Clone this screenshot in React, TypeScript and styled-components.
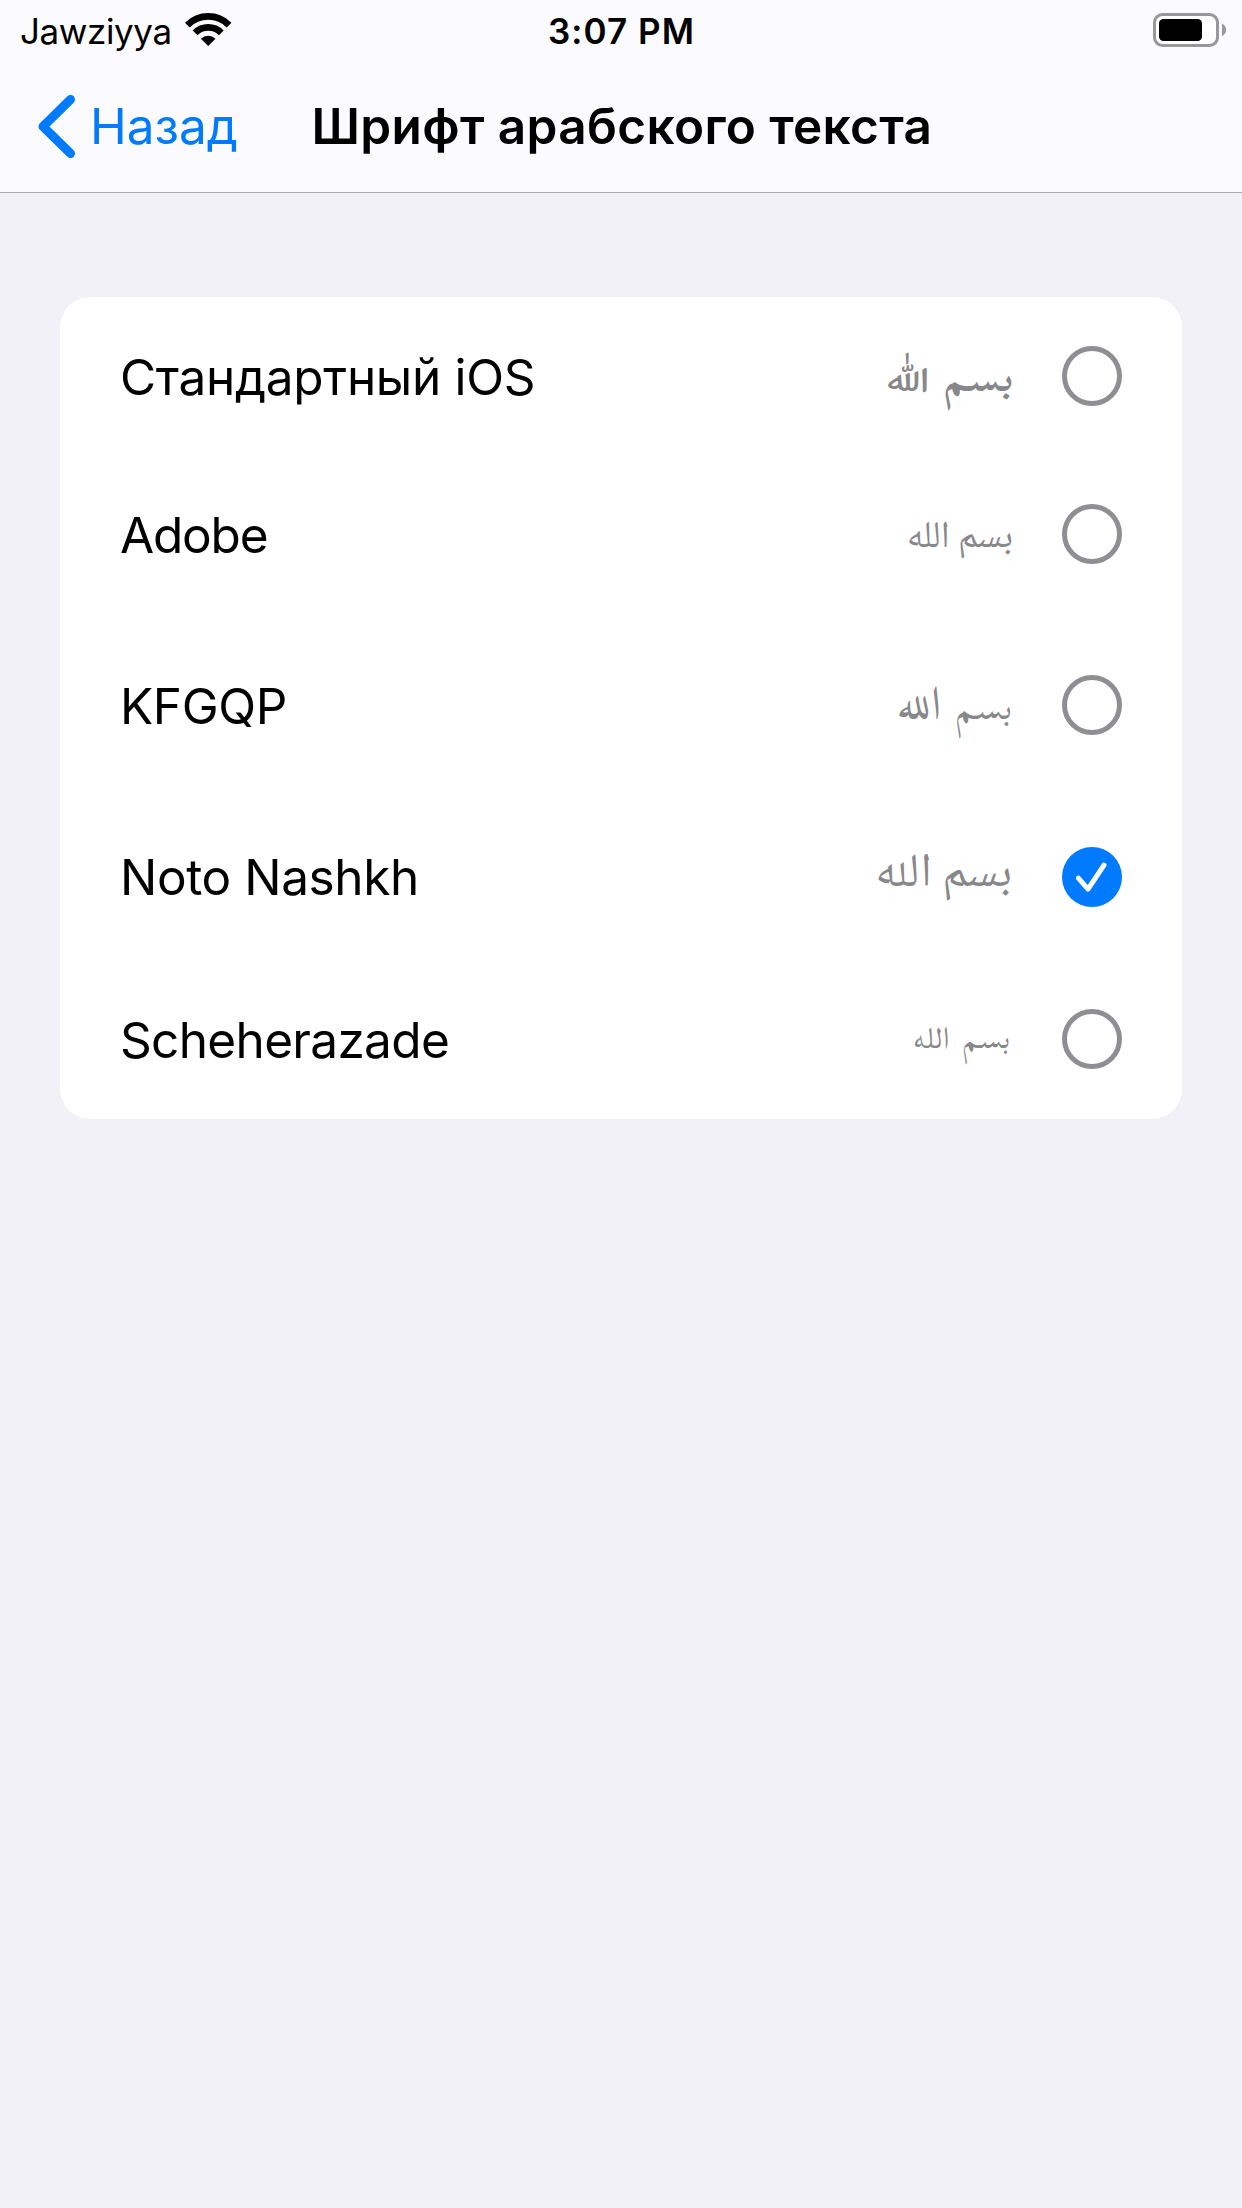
import React, { useState } from "react";
import styled, { createGlobalStyle } from "styled-components";

const GlobalStyle = createGlobalStyle`
  body {
    margin: 0;
    background: #f2f1f7;
    font-family: Inter, "Noto Sans", sans-serif;
    color: #000;
  }
`;

const Screen = styled.div`
  display: flex;
  flex-direction: column;
  width: 1242px;
  min-height: 2208px;
`;

const Header = styled.header`
  background: #fbfbfd;
  border-bottom: 1px solid #a9a9ae;
`;

const StatusBar = styled.div`
  display: grid;
  grid-template-columns: 1fr auto 1fr;
  align-items: center;
  height: 60px;
  padding: 0 16px 0 20px;
`;

const Carrier = styled.div`
  display: flex;
  align-items: center;
  gap: 13px;
`;

const StatusText = styled.span<{ $weight?: number; $tracking: number }>`
  padding-top: 2px;
  font-size: 35px;
  line-height: 40px;
  font-weight: ${(p) => p.$weight ?? 400};
  letter-spacing: ${(p) => p.$tracking}px;
`;

const Clock = styled(StatusText)`
  margin-right: 3px;
`;

const BatteryIcon = styled.svg`
  justify-self: end;
`;

const NavBar = styled.nav`
  display: grid;
  grid-template-columns: 1fr auto 1fr;
  align-items: center;
  height: 132px;
`;

const BackButton = styled.button`
  display: flex;
  align-items: center;
  gap: 15px;
  padding: 0 0 0 38px;
  border: 0;
  background: none;
  color: #007aff;
  font: 400 49.5px/60px Inter, "Noto Sans", sans-serif;
`;

const Chevron = styled.svg`
  margin-top: 1px;
`;

const Title = styled.h1`
  margin: 0 0 0 2px;
  font-size: 49.5px;
  line-height: 60px;
  font-weight: 600;
  letter-spacing: 0.36px;
`;

const Main = styled.main`
  padding: 104px 60px 0;
`;

const Card = styled.ul`
  display: flex;
  flex-direction: column;
  margin: 0;
  padding: 3px 0 0;
  border-radius: 30px;
  background: #fff;
  list-style: none;
`;

const Row = styled.li<{ $height: number }>`
  display: flex;
  align-items: center;
  gap: 48px;
  height: ${(p) => p.$height}px;
  padding: 0 60px;
`;

const RowText = styled.div`
  flex: 1;
  display: flex;
  align-items: baseline;
  justify-content: space-between;
  padding-top: 1px;
`;

const Label = styled.span<{ $tracking: number }>`
  font-size: 49.5px;
  line-height: 60px;
  letter-spacing: ${(p) => p.$tracking}px;
`;

type Face = { family: string; size: number; weight?: number };

type SampleStyle = Face & {
  stretch?: number;
  rise: number;
  inset?: number;
  gap?: number;
  second?: Face;
};

const Sample = styled.span<{ $s: SampleStyle }>`
  margin-right: ${(p) => p.$s.inset ?? 0}px;
  font-family: "${(p) => p.$s.family}", "Noto Naskh Arabic", "DejaVu Sans", sans-serif;
  font-size: ${(p) => p.$s.size}px;
  font-weight: ${(p) => p.$s.weight ?? 400};
  word-spacing: ${(p) => p.$s.gap ?? 0}px;
  line-height: 0;
  color: #88888a;
  transform: translateY(-${(p) => p.$s.rise}px) scaleX(${(p) => p.$s.stretch ?? 1});
  transform-origin: right;
`;

const SecondWord = styled.span<{ $f: Face }>`
  font-family: "${(p) => p.$f.family}", "Noto Naskh Arabic", "DejaVu Sans", sans-serif;
  font-size: ${(p) => p.$f.size}px;
  font-weight: ${(p) => p.$f.weight ?? 400};
`;

const Radio = styled.button<{ $on: boolean }>`
  display: grid;
  place-items: center;
  box-sizing: border-box;
  width: 60px;
  height: 60px;
  padding: 0;
  border: ${(p) => (p.$on ? "0" : "5px solid #8e8e93")};
  border-radius: 50%;
  background: ${(p) => (p.$on ? "#007aff" : "transparent")};
`;

type Option = { label: string; height: number; tracking: number; sample: SampleStyle };

const options: Option[] = [
  {
    label: "Стандартный iOS",
    height: 152,
    tracking: -0.3,
    sample: { family: "Scheherazade New", size: 40, weight: 600, stretch: 1.14, rise: 4, gap: 3, second: { family: "Harmattan", size: 43, weight: 500 } },
  },
  { label: "Adobe", height: 164, tracking: -1.2, sample: { family: "Noto Naskh Arabic", size: 37.5, rise: 6.5, inset: 1 } },
  {
    label: "KFGQP",
    height: 178,
    tracking: -0.4,
    sample: { family: "Scheherazade New", size: 38, rise: 5, inset: 1, gap: 4, second: { family: "Amiri Quran", size: 47 } },
  },
  { label: "Noto Nashkh", height: 165, tracking: -0.4, sample: { family: "Noto Naskh Arabic UI", size: 47.5, rise: 3, inset: 2 } },
  {
    label: "Scheherazade",
    height: 160,
    tracking: -0.66,
    sample: { family: "Scheherazade New", size: 32, rise: 10, inset: 3, gap: 5, second: { family: "FreeSerif", size: 31 } },
  },
];

function Wifi() {
  return (
    <svg width="47" height="34" viewBox="0 0 47 34" fill="none" stroke="#000">
      <path d="M2.3 12.1A29.5 29.5 0 0 1 44.1 12.1" strokeWidth="6.6" />
      <path d="M10.1 19.9A18.5 18.5 0 0 1 36.3 19.9" strokeWidth="6.8" />
      <path d="M15.9 25.7A10.3 10.3 0 0 1 30.5 25.7L23.2 33Z" fill="#000" stroke="none" />
    </svg>
  );
}

function Battery() {
  return (
    <BatteryIcon width="73" height="34" viewBox="0 0 73 34">
      <rect x="1.5" y="1.5" width="63" height="31" rx="8" fill="#fff" stroke="#98989a" strokeWidth="3" />
      <rect x="6" y="6" width="43" height="22" rx="4.5" />
      <path d="M69 10.5Q73 12.5 73 16.8T69 23.2Z" fill="#98989a" />
    </BatteryIcon>
  );
}

export default function App() {
  const [selected, setSelected] = useState("Noto Nashkh");
  return (
    <Screen>
      <GlobalStyle />
      <Header>
        <StatusBar>
          <Carrier>
            <StatusText $tracking={-0.4}>Jawziyya</StatusText>
            <Wifi />
          </Carrier>
          <Clock $weight={560} $tracking={1.05}>3:07 PM</Clock>
          <Battery />
        </StatusBar>
        <NavBar>
          <BackButton>
            <Chevron width="37" height="63" viewBox="0 0 37 63" fill="none" stroke="#007aff" strokeWidth="9" strokeLinecap="round" strokeLinejoin="round">
              <path d="M32.5 4.5L5 31.5L32.5 58.5" />
            </Chevron>
            Назад
          </BackButton>
          <Title>Шрифт арабского текста</Title>
        </NavBar>
      </Header>
      <Main>
        <Card>
          {options.map(({ label, height, tracking, sample }) => (
            <Row key={label} $height={height}>
              <RowText>
                <Label $tracking={tracking}>{label}</Label>
                <Sample $s={sample} lang="ar" dir="rtl">
                  {"بسم "}
                  {sample.second ? <SecondWord $f={sample.second}>الله</SecondWord> : "الله"}
                </Sample>
              </RowText>
              <Radio $on={selected === label} onClick={() => setSelected(label)} aria-label={label}>
                {selected === label && (
                  <svg width="60" height="60" viewBox="0 0 60 60" fill="none" stroke="#fff" strokeWidth="5" strokeLinecap="round" strokeLinejoin="round">
                    <path d="M16.4 31.2L26 42.2L42 18.2" />
                  </svg>
                )}
              </Radio>
            </Row>
          ))}
        </Card>
      </Main>
    </Screen>
  );
}
